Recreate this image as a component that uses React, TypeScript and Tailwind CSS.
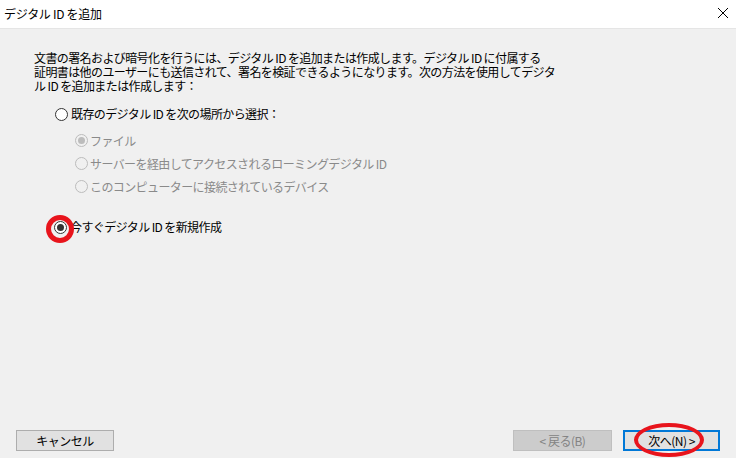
import React from "react";

const font = { fontFamily: '"Noto Sans CJK JP", "Noto Sans", sans-serif' };

function Radio({ checked, disabled }: { checked?: boolean; disabled?: boolean }) {
  return (
    <span
      className={
        "flex items-center justify-center w-[13px] h-[13px] rounded-full border shrink-0 " +
        (disabled ? "border-[#bcbcbc] bg-[#f0f0f0]" : "border-[#333333] bg-white")
      }
    >
      {checked && (
        <span className={"w-[7px] h-[7px] rounded-full " + (disabled ? "bg-[#bcbcbc]" : "bg-[#333333]")} />
      )}
    </span>
  );
}

export default function App() {
  return (
    <div className="w-[736px] h-[458px] bg-[#f0f0f0] flex flex-col relative overflow-hidden text-[12px] text-black" style={font}>
      <div className="h-[29px] bg-white border-b border-[#e5e5e5] flex items-center justify-between pl-[4px] pr-[7px] shrink-0">
        <span className="tracking-[-0.3px]">デジタル ID を追加</span>
        <svg width="12" height="12" viewBox="0 0 12 12" className="mt-[-2px]">
          <path d="M1 1 L11 11 M11 1 L1 11" stroke="#000" strokeWidth="1" />
        </svg>
      </div>

      <div className="flex-1 flex flex-col pl-[34px] pt-[22px]">
        <div className="flex flex-col tracking-[-0.6px]">
          <div className="h-[14px] leading-[14px]">文書の署名および暗号化を行うには、デジタル ID を追加または作成します。デジタル ID に付属する</div>
          <div className="h-[14px] leading-[14px]">証明書は他のユーザーにも送信されて、署名を検証できるようになります。次の方法を使用してデジタ</div>
          <div className="h-[14px] leading-[14px]">ル ID を追加または作成します：</div>
        </div>

        <div className="flex items-center gap-[3px] ml-[21px] mt-[12px] tracking-[-0.6px]">
          <Radio />
          <span>既存のデジタル ID を次の場所から選択：</span>
        </div>
        <div className="flex flex-col ml-[41px] mt-[10px] gap-[8px] text-[#8a8a8a] tracking-[-0.6px]">
          <div className="flex items-center gap-[2px] h-[15px]">
            <Radio checked disabled />
            <span>ファイル</span>
          </div>
          <div className="flex items-center gap-[2px] h-[15px]">
            <Radio disabled />
            <span>サーバーを経由してアクセスされるローミングデジタル ID</span>
          </div>
          <div className="flex items-center gap-[2px] h-[15px]">
            <Radio disabled />
            <span>このコンピューターに接続されているデバイス</span>
          </div>
        </div>

        <div className="flex items-center gap-[3px] ml-[20px] mt-[24px] tracking-[-0.6px]">
          <Radio checked />
          <span>今すぐデジタル ID を新規作成</span>
        </div>
      </div>

      <div className="flex items-center justify-between pl-[16px] pr-[16px] pb-[7px] shrink-0">
        <button className="w-[98px] h-[21px] bg-[#e1e1e1] border border-[#adadad] flex items-center justify-center tracking-[-0.5px]">
          キャンセル
        </button>
        <div className="flex items-center gap-[11px]">
          <button className="w-[99px] h-[21px] bg-[#cccccc] border border-[#bfbfbf] text-[#838383] flex items-center justify-center tracking-[-0.5px]">
            &lt; 戻る(B)
          </button>
          <button className="w-[97px] h-[21px] bg-[#e1e1e1] border-2 border-[#0078d7] flex items-center justify-center tracking-[-0.5px]">
            次へ(N) &gt;
          </button>
        </div>
      </div>

      <div className="absolute left-[46px] top-[215px] w-[28px] h-[28px] rounded-full border-[5px] border-[#e8141c] pointer-events-none" />
      <div className="absolute left-[634px] top-[423px] w-[70px] h-[34px] rounded-[50%] border-[4px] border-[#e8141c] pointer-events-none" />
    </div>
  );
}
